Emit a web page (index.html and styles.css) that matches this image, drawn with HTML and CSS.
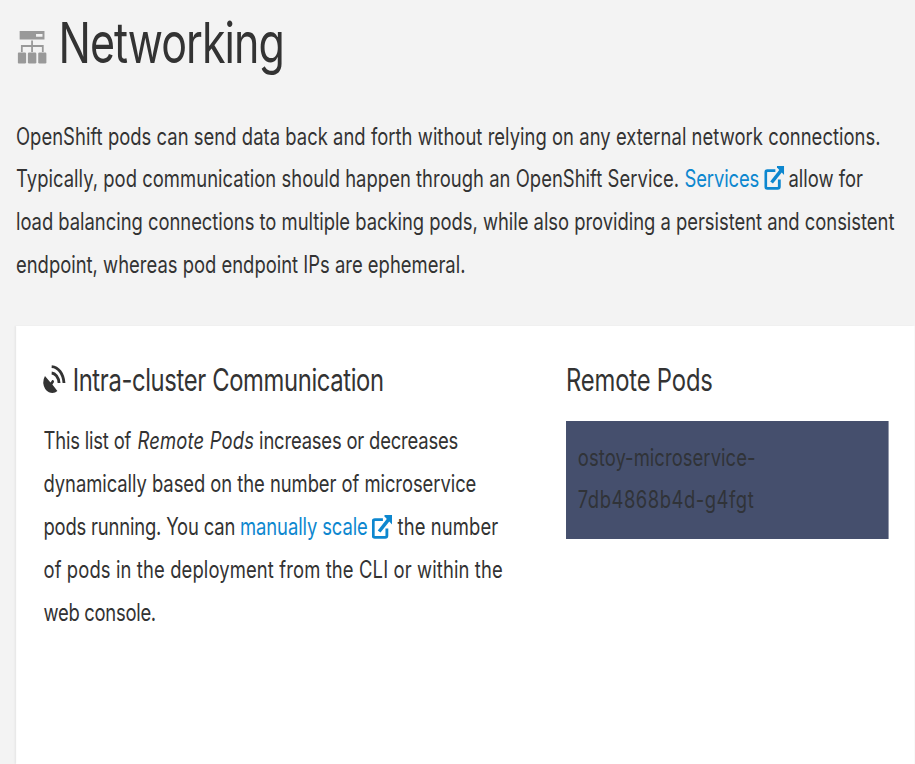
FILE: index.html
```
<!DOCTYPE html>
<html lang="en">
<head>
<meta charset="utf-8">
<title>Networking</title>
<link rel="stylesheet" href="styles.css">
</head>
<body>
<svg width="0" height="0" class="defs">
  <symbol id="external" viewBox="0 0 20 24" preserveAspectRatio="none">
    <path d="M11 4.7H3.2Q1.5 4.7 1.5 6.5V20.5Q1.5 22.4 3.2 22.4H13.2Q14.9 22.4 14.9 20.5V13.5" fill="none" stroke="currentColor" stroke-width="2.8"/>
    <path d="M7.3 16.5 17.5 3.4" fill="none" stroke="currentColor" stroke-width="3.4"/>
    <path d="M12.6 0H20V9.6L12.6 1.6Z" fill="currentColor"/>
  </symbol>
</svg>
<main class="page">
  <header class="title">
    <svg class="net-icon" viewBox="0 0 29 33" preserveAspectRatio="none" fill="currentColor">
      <path fill-rule="evenodd" d="M2 0H27V8.5H2ZM18.5 3V5.7H25V3Z"/>
      <path d="M14.5 9.5V21M4.2 21V15H25.3V21" fill="none" stroke="currentColor" stroke-width="1.8"/>
      <rect x="0" y="21.5" width="8.5" height="11" rx="1.3"/>
      <rect x="10.3" y="21.5" width="8.5" height="11" rx="1.3"/>
      <rect x="20.7" y="21.5" width="8.3" height="11" rx="1.3"/>
    </svg>
    <h1>Networking</h1>
  </header>
  <p class="intro">
    <span class="line loose-intro">OpenShift pods can send data back and forth without relying on any external network connections.</span>
    <span class="line services-line"><span class="loose-intro">Typically, pod communication should happen through an OpenShift Service.</span> <a class="services">Services</a> <a><svg class="ext"><use href="#external"/></svg></a> <span>allow for</span></span>
    <span class="line even">load balancing connections to multiple backing pods, while also providing a persistent and consistent</span>
    <span class="line">endpoint, whereas pod endpoint IPs are ephemeral.</span>
  </p>
  <section class="card">
    <div class="about">
      <h2><svg class="dish" viewBox="0 0 23 29" preserveAspectRatio="none">
        <path d="M2 11 7.6 17.4 9.4 15Q11.3 14.7 11.2 17L9.5 19.5 14.6 26Q11 29.3 6 27.3 1 24.5.3 18.5 0 14.5 2 11Z" fill="currentColor"/>
        <path d="M8.8 1.6C15.5 2 20.6 8.5 21.3 18M8.8 8C12.5 8.3 15.8 12 16.3 18" fill="none" stroke="currentColor" stroke-width="2.9"/>
      </svg><span class="wide-head">Intra-cluster Communication</span></h2>
      <p>
        <span class="line list-line"><span class="tight">This list of</span> <em>Remote Pods</em> <span class="increases">increases or decreases</span></span>
        <span class="line snug">dynamically based on the number of microservice</span>
        <span class="line scale-line"><span class="tight">pods running. You can</span> <a class="services">manually scale</a> <a><svg class="ext"><use href="#external"/></svg></a> <span class="loose">the number</span></span>
        <span class="line loose">of pods in the deployment from the CLI or within the</span>
        <span class="line tighter">web console.</span>
      </p>
    </div>
    <div class="remote">
      <h2>Remote Pods</h2>
      <div class="pod"><span class="line service-name">ostoy-microservice-</span><span class="line digits">7db4868b4d-g4fgt</span></div>
    </div>
  </section>
</main>
</body>
</html>
```
FILE: styles.css
```
* { box-sizing: border-box; }
html, body { margin: 0; height: 764px; overflow: hidden; background: #f3f3f3; }
.defs { display: none; }
/* The whole page uses a condensed horizontal scale. */
.page {
  width: 1191.4px;
  height: 764px;
  transform: scaleX(.768);
  transform-origin: 0 0;
  display: flex;
  flex-direction: column;
  overflow: hidden;
  padding: 12.5px 0 0 20.8px;
  font-family: Inter, "Liberation Sans", sans-serif;
  font-size: 24px;
  line-height: 42.85px;
  color: #333;
}
h1, h2, p { margin: 0; font-weight: 400; }
.title { display: flex; height: 103px; }
.net-icon { width: 37.5px; height: 33px; margin: 18.5px 0 0 2.3px; color: #999; }
h1 { margin-left: 15.5px; font-size: 56px; line-height: 60px; letter-spacing: -1.25px; }
.intro { height: 210.5px; }
.line { display: block; white-space: nowrap; }
.services-line, .list-line, .scale-line { display: grid; height: 42.85px; }
.services-line { grid-template-columns: 870.4px 103.6px 31.9px auto; }
.list-line { grid-template-columns: 122.4px 158.4px auto; }
.scale-line { grid-template-columns: 256px 171.8px 33.2px auto; }
a { color: #0d87cf; }
.ext { display: block; width: 26.5px; height: 24px; margin-top: 7.6px; }
.scale-line .ext { margin-top: 9px; }
.tight { letter-spacing: -.24px; }
.tighter { letter-spacing: -.36px; }
.services { letter-spacing: -.15px; }
.increases { letter-spacing: -.24px; }
.snug { letter-spacing: -.08px; }
.even { letter-spacing: -.04px; }
.loose-intro { letter-spacing: .04px; }
.loose { letter-spacing: .15px; }
em { letter-spacing: .23px; }
.digits { letter-spacing: .68px; }
.service-name { letter-spacing: .08px; }
.card {
  flex: 1;
  display: flex;
  padding: 33.5px 0 0 35.8px;
  background: #fff;
  box-shadow: -2px 0 2px rgba(0, 0, 0, .05);
}
.about { width: 680.3px; }
.about p { margin-top: .8px; }
h2 { display: flex; height: 60.2px; font-size: 31px; line-height: 40px; letter-spacing: -.22px; white-space: nowrap; }
.dish { width: 29.5px; height: 29px; margin: 5.5px 9px 0 -.5px; }
.wide-head { letter-spacing: -.48px; }
.remote { width: 420.6px; }
.pod { margin-top: 1.3px; height: 118.5px; padding: 15.6px 15.5px; background: #454f6d; color: #303338; }
```
